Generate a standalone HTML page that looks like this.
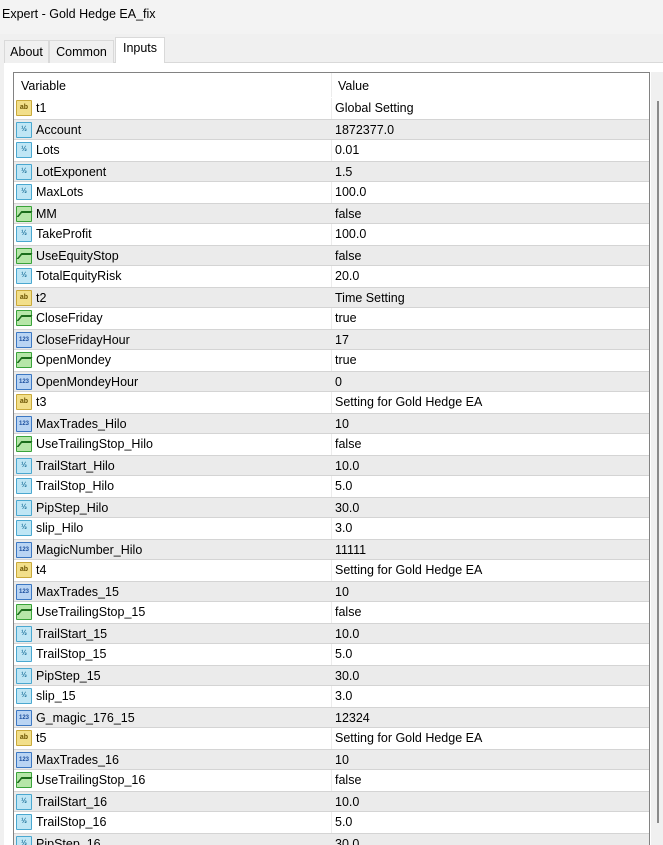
<!DOCTYPE html>
<html><head><meta charset="utf-8"><style>
*{margin:0;padding:0;box-sizing:border-box}
body{width:663px;height:845px;overflow:hidden;background:#f0f0f0;font-family:"Liberation Sans",sans-serif;font-size:12.5px;color:#000;position:relative}
.title{position:absolute;left:0;top:0;width:663px;height:34px;background:#f3f3f3;padding:7px 0 0 2px;font-size:12.5px}
.tabs{position:absolute;top:40px;left:4px;height:23px}
.tab{position:absolute;top:0;height:23px;padding:4px 0 0 0;text-align:center;background:#f0f0f0;border:1px solid #d9d9d9;border-bottom:none}
.tab.sel{background:#fff;top:-3px;height:26px;padding-top:3px}
.panel{position:absolute;left:4px;top:62px;width:659px;height:783px;background:#fff;border-top:1px solid #d9d9d9}
.grid{position:absolute;left:13px;top:72px;width:637px;height:773px;border:1px solid #828282;border-bottom:none;background:#fff;overflow:hidden}
.hdr{height:25px;position:relative;border-bottom:1px solid #fff}
.hdr span{position:absolute;top:6px}
.row{height:21px;position:relative;white-space:nowrap}
.row:nth-child(even){background:#ebebeb;border-top:1px solid #d4d4d4;border-bottom:1px solid #d4d4d4}
.n{position:absolute;left:22px;top:3px}
.v{position:absolute;left:321px;top:3px}
.col{position:absolute;left:317px;top:0;width:1px;height:800px;background:#ececec}
.ic{position:absolute;left:2px;top:2px;width:16px;height:16px;border-radius:1px;font-size:7px;line-height:14px;text-align:center;font-weight:bold;font-style:normal}
.ab{background:#f2df8a;border:1px solid #c9a93a;color:#6a5200}
.fr{background:#bfe6f5;border:1px solid #4aa8d0;color:#1a6f99}
.bo{background:#b6e6a8;border:1px solid #3aa33a}
.bo:after{content:"";position:absolute;left:2px;top:4px;width:9px;height:4px;border-top:2px solid #1c6d1c;border-left:2px solid #1c6d1c;transform:skewX(-40deg)}
.in{background:#b9d4f3;border:1px solid #3c78c3;color:#1b4e9e;font-size:6px}
.sb{position:absolute;left:651px;top:72px;width:12px;height:773px;background:#f0f0f0}
.sb div{position:absolute;left:6px;top:29px;width:2px;height:722px;background:#8a8a8a}
</style></head><body>
<div class="title">Expert - Gold Hedge EA_fix</div>
<div class="panel"></div>
<div class="tabs">
<div class="tab" style="left:0;width:45px">About</div>
<div class="tab" style="left:45px;width:65px">Common</div>
<div class="tab sel" style="left:111px;width:50px">Inputs</div>
</div>
<div class="grid">
<div class="col"></div>
<div class="hdr"><span style="left:7px">Variable</span><span style="left:324px">Value</span></div>
<div>
<div class="row"><i class="ic ab">ab</i><span class="n">t1</span><span class="v">Global Setting</span></div>
<div class="row"><i class="ic fr">½</i><span class="n">Account</span><span class="v">1872377.0</span></div>
<div class="row"><i class="ic fr">½</i><span class="n">Lots</span><span class="v">0.01</span></div>
<div class="row"><i class="ic fr">½</i><span class="n">LotExponent</span><span class="v">1.5</span></div>
<div class="row"><i class="ic fr">½</i><span class="n">MaxLots</span><span class="v">100.0</span></div>
<div class="row"><i class="ic bo"></i><span class="n">MM</span><span class="v">false</span></div>
<div class="row"><i class="ic fr">½</i><span class="n">TakeProfit</span><span class="v">100.0</span></div>
<div class="row"><i class="ic bo"></i><span class="n">UseEquityStop</span><span class="v">false</span></div>
<div class="row"><i class="ic fr">½</i><span class="n">TotalEquityRisk</span><span class="v">20.0</span></div>
<div class="row"><i class="ic ab">ab</i><span class="n">t2</span><span class="v">Time Setting</span></div>
<div class="row"><i class="ic bo"></i><span class="n">CloseFriday</span><span class="v">true</span></div>
<div class="row"><i class="ic in">123</i><span class="n">CloseFridayHour</span><span class="v">17</span></div>
<div class="row"><i class="ic bo"></i><span class="n">OpenMondey</span><span class="v">true</span></div>
<div class="row"><i class="ic in">123</i><span class="n">OpenMondeyHour</span><span class="v">0</span></div>
<div class="row"><i class="ic ab">ab</i><span class="n">t3</span><span class="v">Setting for Gold Hedge EA</span></div>
<div class="row"><i class="ic in">123</i><span class="n">MaxTrades_Hilo</span><span class="v">10</span></div>
<div class="row"><i class="ic bo"></i><span class="n">UseTrailingStop_Hilo</span><span class="v">false</span></div>
<div class="row"><i class="ic fr">½</i><span class="n">TrailStart_Hilo</span><span class="v">10.0</span></div>
<div class="row"><i class="ic fr">½</i><span class="n">TrailStop_Hilo</span><span class="v">5.0</span></div>
<div class="row"><i class="ic fr">½</i><span class="n">PipStep_Hilo</span><span class="v">30.0</span></div>
<div class="row"><i class="ic fr">½</i><span class="n">slip_Hilo</span><span class="v">3.0</span></div>
<div class="row"><i class="ic in">123</i><span class="n">MagicNumber_Hilo</span><span class="v">11111</span></div>
<div class="row"><i class="ic ab">ab</i><span class="n">t4</span><span class="v">Setting for Gold Hedge EA</span></div>
<div class="row"><i class="ic in">123</i><span class="n">MaxTrades_15</span><span class="v">10</span></div>
<div class="row"><i class="ic bo"></i><span class="n">UseTrailingStop_15</span><span class="v">false</span></div>
<div class="row"><i class="ic fr">½</i><span class="n">TrailStart_15</span><span class="v">10.0</span></div>
<div class="row"><i class="ic fr">½</i><span class="n">TrailStop_15</span><span class="v">5.0</span></div>
<div class="row"><i class="ic fr">½</i><span class="n">PipStep_15</span><span class="v">30.0</span></div>
<div class="row"><i class="ic fr">½</i><span class="n">slip_15</span><span class="v">3.0</span></div>
<div class="row"><i class="ic in">123</i><span class="n">G_magic_176_15</span><span class="v">12324</span></div>
<div class="row"><i class="ic ab">ab</i><span class="n">t5</span><span class="v">Setting for Gold Hedge EA</span></div>
<div class="row"><i class="ic in">123</i><span class="n">MaxTrades_16</span><span class="v">10</span></div>
<div class="row"><i class="ic bo"></i><span class="n">UseTrailingStop_16</span><span class="v">false</span></div>
<div class="row"><i class="ic fr">½</i><span class="n">TrailStart_16</span><span class="v">10.0</span></div>
<div class="row"><i class="ic fr">½</i><span class="n">TrailStop_16</span><span class="v">5.0</span></div>
<div class="row"><i class="ic fr">½</i><span class="n">PipStep_16</span><span class="v">30.0</span></div>
</div>
</div>
<div class="sb"><div></div></div>
</body></html>
